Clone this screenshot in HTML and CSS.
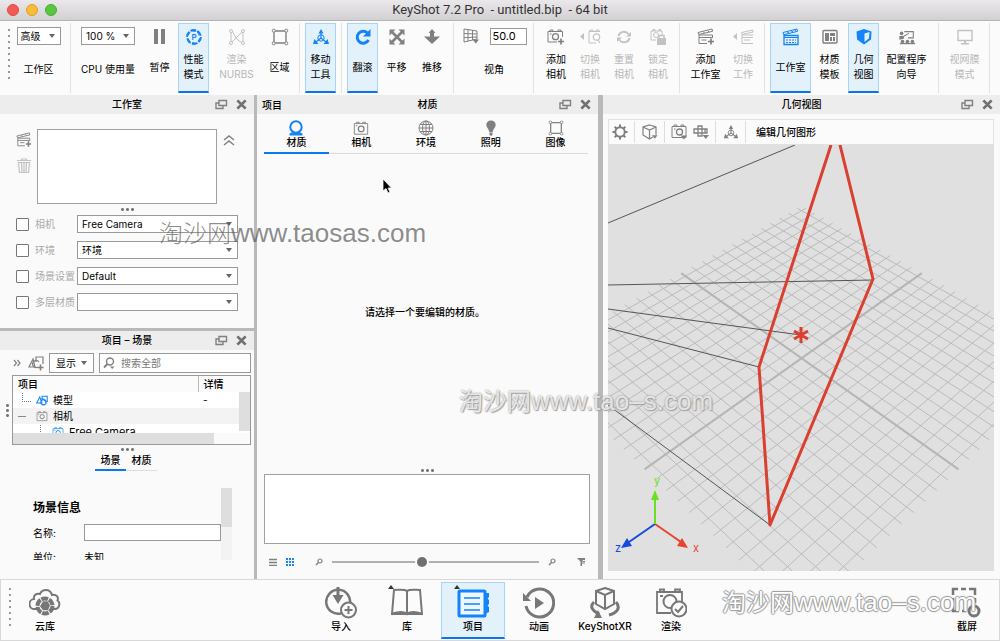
FILE: index.html
```html
<!DOCTYPE html>
<html lang="zh-CN">
<head>
<meta charset="utf-8">
<meta name="viewport" content="width=device-width, initial-scale=1">
<title>KeyShot 7.2 Pro - untitled.bip - 64 bit</title>
<link rel="stylesheet" href="styles.css">
<script src="grid.js" defer></script>
</head>
<body>
<svg class="sprite" aria-hidden="true">
  <symbol id="i-pause" viewBox="0 0 18 18"><path d="M3 1h4v15H3zM10 1h4v15h-4z" fill="currentColor"/></symbol>
  <symbol id="i-perf" viewBox="0 0 18 18"><circle cx="9" cy="9" r="7" fill="none" stroke="currentColor" stroke-width="1.800" stroke-dasharray="5.800 1.500"/><path d="M5.500 2.500l5 1M12 3l2.500 4.500M15.500 9.500l-2.500 4M12 15.500l-5-.8M5.500 15L3 10.500M2.500 8l2.500-4" fill="none" stroke="currentColor" stroke-width="1.200"/><text x="9.200" y="12" font-size="8" font-weight="600" text-anchor="middle" fill="currentColor">P</text></symbol>
  <symbol id="i-nurbs" viewBox="0 0 18 18"><path d="M3 3v12L15 3v12M3 3c4 1 3 9 12 12" fill="none" stroke="currentColor"/><g fill="#fff" stroke="currentColor"><circle cx="3" cy="3" r="1.500"/><circle cx="15" cy="3" r="1.500"/><circle cx="3" cy="15" r="1.500"/><circle cx="15" cy="15" r="1.500"/></g></symbol>
  <symbol id="i-region" viewBox="0 0 18 18"><path d="M3 3h12v12H3z" fill="none" stroke="currentColor" stroke-width="1.400"/><g fill="#fff" stroke="currentColor"><circle cx="2.700" cy="2.700" r="1.500"/><circle cx="15.300" cy="2.700" r="1.500"/><circle cx="2.700" cy="15.300" r="1.500"/><circle cx="15.300" cy="15.300" r="1.500"/></g></symbol>
  <symbol id="i-move" viewBox="0 0 18 18"><path d="M9 4v6M9 10l-5 4M9 10l5 4" fill="none" stroke="currentColor" stroke-width="1.200"/><circle cx="9" cy="10" r="3.200" fill="none" stroke="currentColor"/><path d="M9 1l2.500 4.500h-5zM1 16l1.500-5 4 5zM17 16l-1.500-5-4 5z" fill="currentColor"/></symbol>
  <symbol id="i-tumble" viewBox="0 0 18 18"><path d="M13.500 5A6 6 0 1 0 14.500 12" fill="none" stroke="currentColor" stroke-width="3"/><path d="M16.500 1v7.500H9z" fill="currentColor"/></symbol>
  <symbol id="i-pan" viewBox="0 0 18 18"><path d="M4 4l10 10M14 4L4 14" stroke="currentColor" stroke-width="2.500"/><path d="M1.500 1.500h6l-6 6zM16.500 1.500v6l-6-6zM1.500 16.500v-6l6 6zM16.500 16.500h-6l6-6z" fill="currentColor"/></symbol>
  <symbol id="i-dolly" viewBox="0 0 18 18"><path d="M9 1l3.500 4h-1.500V8.500h6L9 16 1 8.500h6V5H5.500z" fill="currentColor"/></symbol>
  <symbol id="i-fov" viewBox="0 0 18 18"><path d="M2 2l13 2v8L2 15zM2 6.500l13 .500M2 10.700l13-.700M6 2.600v11.500M10.500 3.300v9.700" fill="none" stroke="currentColor"/><path d="M10.500 12.500h6.500l-3.200 4z" fill="currentColor"/></symbol>
  <symbol id="i-camera" viewBox="0 0 18 18"><path d="M1.500 4h15v12h-15zM4 4V2.500h3V4M11 4V2.500h3V4" fill="none" stroke="currentColor"/><circle cx="9.200" cy="10" r="3.200" fill="none" stroke="currentColor" stroke-width="1.400"/><path d="M3 6.500h2" stroke="currentColor"/></symbol>
  <symbol id="i-camera-add" viewBox="0 0 18 18"><path d="M15.500 9V3.500H1V14h9M3 3.500V2h3v1.500M11 3.500V2h3v1.500M3 6h1.500" fill="none" stroke="currentColor"/><circle cx="8.500" cy="8.700" r="3" fill="none" stroke="currentColor" stroke-width="1.300"/><path d="M14 10.500v6M11 13.500h6" stroke="currentColor" stroke-width="1.700"/></symbol>
  <symbol id="i-camera-next" viewBox="0 0 24 18"><path d="M6 5v7L2 8.500z" fill="currentColor"/><path d="M22 3.500H11V15h7M12 3.500V2h3v1.500M18 3.500V2h3v1.500" fill="none" stroke="currentColor"/><circle cx="18.500" cy="9" r="3.200" fill="none" stroke="currentColor" stroke-width="1.200"/><path d="M20 12l2 3" stroke="currentColor" stroke-width="1.200"/></symbol>
  <symbol id="i-reset" viewBox="0 0 18 18"><path d="M3.500 8a5.500 5 0 0 1 10-2M14.500 10a5.500 5 0 0 1-10 2" fill="none" stroke="currentColor" stroke-width="1.900"/><path d="M16 4v4.500h-5zM2 14V9.500h5z" fill="currentColor"/></symbol>
  <symbol id="i-lock" viewBox="0 0 18 18"><path d="M13 7V3H2v9h5M4 3V1.500h2V3M10 3V1.500h2V3" fill="none" stroke="currentColor"/><circle cx="7" cy="7" r="2.500" fill="none" stroke="currentColor"/><path d="M8 10h9v7H8z" fill="currentColor"/><path d="M10 10V7.500h5V10" fill="none" stroke="currentColor" stroke-width="1.500"/></symbol>
  <symbol id="i-studio" viewBox="0 0 18 18"><path d="M2 7.500h14v9H2z" fill="none" stroke="currentColor" stroke-width="1.300"/><path d="M1 4.500L15 1l.6 2.300L1.700 6.700z" fill="none" stroke="currentColor"/><path d="M5 3.800l2 1.200M9 2.800l2 1.200M12.500 2l1.500 1" stroke="currentColor"/><path d="M2 9.500h14" stroke="currentColor"/><path d="M4 14.500h10M4 12h10" stroke="currentColor" stroke-dasharray="2 1"/></symbol>
  <symbol id="i-studio-add" viewBox="0 0 18 18"><path d="M15.500 10V7H2v8.500h8M2 9.500h13.500M4.500 12h5" fill="none" stroke="currentColor"/><path d="M1 4.500L15 1l.6 2.300L1.700 6.500zM6 3.500l1.500 1.500M10.500 2.500L12 4" fill="none" stroke="currentColor"/><path d="M14 10.500v6M11 13.500h6" stroke="currentColor" stroke-width="1.700"/></symbol>
  <symbol id="i-studio-next" viewBox="0 0 24 18"><path d="M6 5v7L2 8.500z" fill="currentColor"/><path d="M22 7H11v8.500h11M11 9.500h11M13 12h6" fill="none" stroke="currentColor"/><path d="M10.500 4.500L22 2v2L11 6.500z" fill="none" stroke="currentColor"/></symbol>
  <symbol id="i-template" viewBox="0 0 18 18"><rect x="2" y="2.500" width="14" height="12.500" rx="1" fill="none" stroke="currentColor" stroke-width="1.400"/><path d="M4 5h4v8H4zM9 5h5v3H9zM9 9h2v4H9zM12 9h2v4h-2z" fill="currentColor"/></symbol>
  <symbol id="i-geo" viewBox="0 0 18 18"><path d="M9 1l7.500 2.500-.5 8L9 16.500 2 11.500l-.5-8z" fill="currentColor"/><path d="M9.500 5.500l5-1.500-.5 6.300-4.500 3.700z" fill="#e3f1fa"/></symbol>
  <symbol id="i-wizard" viewBox="0 0 20 18"><path d="M7 3h10v7h-6M5 9l7-4" fill="none" stroke="currentColor" stroke-width="1.200"/><circle cx="4" cy="5" r="2" fill="currentColor"/><path d="M1.500 12V8h5v3z" fill="currentColor"/><g fill="currentColor"><circle cx="5" cy="14" r="2"/><circle cx="10.500" cy="14" r="2"/><circle cx="16" cy="14" r="2"/><path d="M2 17h17v-1.500H2z"/></g></symbol>
  <symbol id="i-monitor" viewBox="0 0 18 18"><path d="M2 2.500h14v10H2z" fill="none" stroke="currentColor" stroke-width="1.400"/><path d="M8 13h2v2h3v1.500H5V15h3z" fill="currentColor"/></symbol>
  <symbol id="i-float" viewBox="0 0 14 12"><path d="M5 1.500h7.500v5H5zM5 4H2v5.500h7V7" fill="none" stroke="currentColor" stroke-width="1.400"/></symbol>
  <symbol id="i-close" viewBox="0 0 12 12"><path d="M1.500 1.500l9 9M10.500 1.500l-9 9" stroke="currentColor" stroke-width="3"/></symbol>
  <symbol id="i-trash" viewBox="0 0 16 16"><path d="M1 2.500h14M5.500 2.500V1h5v1.500M2.500 4.500l1 10h9l1-10zM5.500 5l.5 9M8 5v9M10.500 5l-.5 9" fill="none" stroke="currentColor" stroke-width="1.200"/></symbol>
  <symbol id="i-up" viewBox="0 0 12 12"><path d="M1 6l5-4 5 4M1 11l5-4 5 4" fill="none" stroke="currentColor" stroke-width="1.500"/></symbol>
  <symbol id="i-more" viewBox="0 0 8 8"><path d="M1 1l2.500 3L1 7M4.500 1L7 4 4.500 7" fill="none" stroke="currentColor" stroke-width="1.200"/></symbol>
  <symbol id="i-shapes" viewBox="0 0 16 16"><path d="M5 4L1 12h7zM8 8V3h7v7l-3 1M8 5l5 5" fill="none" stroke="currentColor" stroke-width="1.400"/><circle cx="10" cy="11" r="3.500" fill="none" stroke="currentColor" stroke-width="1.400"/></symbol>
  <symbol id="i-shapes-add" viewBox="0 0 16 16"><path d="M5 4L1 12h6zM8 7V2h7v7" fill="none" stroke="currentColor" stroke-width="1.200"/><path d="M11 7a3.500 3.500 0 1 0-1 5" fill="none" stroke="currentColor" stroke-width="1.200"/><path d="M12.500 9.500v6M9.500 12.500h6" stroke="currentColor" stroke-width="1.600"/></symbol>
  <symbol id="i-search" viewBox="0 0 12 12"><circle cx="7" cy="4.500" r="3.500" fill="none" stroke="currentColor" stroke-width="1.400"/><path d="M4.500 7L1 10.500" stroke="currentColor" stroke-width="1.800"/><path d="M7 9.500h4.500L9.200 12z" fill="currentColor"/></symbol>
  <symbol id="i-loupe" viewBox="0 0 8 8"><circle cx="5" cy="3" r="2" fill="none" stroke="currentColor" stroke-width="1.200"/><path d="M3.500 4.500L1 7" stroke="currentColor" stroke-width="1.500"/></symbol>
  <symbol id="i-material" viewBox="0 0 16 16"><circle cx="8" cy="7" r="5.700" fill="none" stroke="currentColor" stroke-width="2"/><path d="M1.500 15.500v-2l3-1.500h7l3 1.500v2z" fill="currentColor"/></symbol>
  <symbol id="i-globe" viewBox="0 0 16 16"><g fill="none" stroke="currentColor"><circle cx="8" cy="8" r="7"/><ellipse cx="8" cy="8" rx="3.500" ry="7"/><path d="M8 1v14M1 8h14M2 4.500h12M2 11.500h12"/></g></symbol>
  <symbol id="i-bulb" viewBox="0 0 16 16"><path d="M8 .5c3 0 4.700 2 4.700 4.500S10 9 9.700 12H6.300C6 9 3.300 7.500 3.300 5S5 .5 8 .5zM6.500 12.500h3V15l-1.500 1-1.500-1z" fill="currentColor"/></symbol>
  <symbol id="i-list" viewBox="0 0 8 8"><path d="M0 1.500h8M0 4.500h8M0 7.500h8" stroke="currentColor" stroke-width="1.500"/></symbol>
  <symbol id="i-tiles" viewBox="0 0 8 8"><path d="M0 0h2v2H0zM3 0h2v2H3zM6 0h2v2H6zM0 3h2v2H0zM3 3h2v2H3zM6 3h2v2H6zM0 6h2v2H0zM3 6h2v2H3zM6 6h2v2H6z" fill="currentColor"/></symbol>
  <symbol id="i-filter" viewBox="0 0 8 8"><path d="M0 0h8v2H6L5 3.500V8H3.500V3.500z" fill="currentColor"/><path d="M5 5h3M5.500 3.500H8" stroke="currentColor"/></symbol>
  <symbol id="i-gear" viewBox="0 0 16 16"><circle cx="8" cy="8" r="4.700" fill="none" stroke="currentColor" stroke-width="1.900"/><path d="M8 .5V3M8 13v2.500M.5 8H3M13 8h2.500M2.700 2.700l1.800 1.800M11.500 11.500l1.800 1.800M13.300 2.700l-1.800 1.800M4.500 11.500l-1.800 1.800" stroke="currentColor" stroke-width="2"/></symbol>
  <symbol id="i-cube" viewBox="0 0 16 16"><path d="M7.500 1L14 3v8l-6.500 4L1 11V3zM1 3l6.500 3L14 3M7.500 6v9" fill="none" stroke="currentColor" stroke-width="1.200"/><path d="M9.500 11H16l-3.200 4z" fill="currentColor" stroke="#fbfbfb" stroke-width=".5"/></symbol>
  <symbol id="i-camera-menu" viewBox="0 0 16 16"><path d="M1 2.500h14v11H1zM3 2.500V1h3v1.500M10 2.500V1h3v1.500M3 5h1.500" fill="none" stroke="currentColor"/><circle cx="8.500" cy="8" r="3" fill="none" stroke="currentColor" stroke-width="1.300"/><path d="M9.500 11.500H16l-3.200 4z" fill="currentColor"/></symbol>
  <symbol id="i-views" viewBox="0 0 16 16"><path d="M5 2h4v10H5zM1 5h13v4H1zM9 2v10M12 5v4" fill="none" stroke="currentColor" stroke-width="1.300"/><path d="M9.500 11H16l-3.200 4z" fill="currentColor"/></symbol>
  <symbol id="i-cloud" viewBox="0 0 32 32"><path d="M8 22H6a5 5 0 0 1-1-10C4 8 8 6 11 7c2-5 10-6 12 1 4-1 7 2 5.500 5.500C32 16 30 22 26 22h-2" fill="none" stroke="currentColor" stroke-width="2"/><circle cx="16" cy="19" r="7.500" fill="none" stroke="currentColor" stroke-width="4" stroke-dasharray="6.800 1.050"/><path d="M14 14.200h4.500l2.500 4-2 5h-5l-3-4z" fill="currentColor"/></symbol>
  <symbol id="i-import" viewBox="0 0 32 32"><path d="M16 26.500A12 12 0 1 1 25 17" fill="none" stroke="currentColor" stroke-width="2.500"/><path d="M11.500 0h3v8h4L13 17 7.500 8h4z" fill="currentColor"/><circle cx="23.500" cy="23" r="7.500" fill="#fbfbfb" stroke="currentColor" stroke-width="2"/><path d="M23.500 19v8M19.500 23h8" stroke="currentColor" stroke-width="2"/></symbol>
  <symbol id="i-book" viewBox="0 0 32 32"><path d="M3 3c5 0 10-1 13 1 3-2 8-1 13-1l2 24H1zM16 4v23" fill="none" stroke="currentColor" stroke-width="2"/><path d="M1 27c6-2 12-2 15 0 3-2 9-2 15 0" fill="none" stroke="currentColor" stroke-width="2.500"/></symbol>
  <symbol id="i-project" viewBox="0 0 32 32"><rect x="2" y="4" width="26" height="25" rx="1" fill="#edf7fd" stroke="currentColor" stroke-width="3"/><path d="M7 11h16M7 17h16M7 23h16" stroke="currentColor" stroke-width="1.500"/><path d="M28 6h4v4l-1.500 1.500L32 13v4l-1.500 1.500L32 20v5l-4 2z" fill="currentColor"/></symbol>
  <symbol id="i-anim" viewBox="0 0 32 32"><path d="M4 10A14 14 0 1 1 3 19" fill="none" stroke="currentColor" stroke-width="3"/><path d="M0 6v8h8zM12 10l9 6-9 6z" fill="currentColor"/></symbol>
  <symbol id="i-xr" viewBox="0 0 32 32"><path d="M16 1l9 3v13l-9 5-9-5V4zM7 4l9 4 9-4M16 8v14" fill="none" stroke="currentColor" stroke-width="2"/><path d="M5 15c-4 4-3 8 5 12M27 15c5 6 1 11-7 13" fill="none" stroke="currentColor" stroke-width="3"/><path d="M9 23l4 8H5z" fill="currentColor"/></symbol>
  <symbol id="i-render" viewBox="0 0 32 32"><path d="M16 26H2V5h25v12M5 5V2.500h4V5M20 5V2.500h5V5M5 9h3" fill="none" stroke="currentColor" stroke-width="1.800"/><circle cx="15" cy="14.500" r="6.500" fill="none" stroke="currentColor" stroke-width="2"/><circle cx="24" cy="22" r="7.500" fill="#fbfbfb" stroke="currentColor" stroke-width="2"/><path d="M20 22l3 3 5-6" fill="none" stroke="currentColor" stroke-width="2"/></symbol>
  <symbol id="i-shot" viewBox="0 0 32 32"><path d="M2 8V2h5M10 2h5M18 2h6v6M24 11v5M2 11v5M2 19v5h6M11 24h4" fill="none" stroke="currentColor" stroke-width="2.500"/><circle cx="23" cy="24" r="5" fill="none" stroke="currentColor" stroke-width="3"/></symbol>
</svg>

<div class="app">
  <header class="titlebar">
    <div class="lights"><i class="light light-red"></i><i class="light light-amber"></i><i class="light light-green"></i></div>
    <h1 class="titlebar-text">KeyShot 7.2 Pro &nbsp;- untitled.bip &nbsp;- 64 bit</h1>
  </header>

  <nav class="toolbar" aria-label="工具栏">
    <i class="grip"></i>
    <div class="group group-field">
      <span class="combo combo-mode"><select id="mode"><option>高级</option></select></span>
      <label class="field-label" for="mode">工作区</label>
    </div>
    <div class="group group-cpu">
      <div class="field">
        <span class="combo combo-cpu"><select id="cpu"><option>100 %</option></select></span>
        <label class="field-label" for="cpu">CPU 使用量</label>
      </div>
      <button class="tool w-m"><svg class="icon"><use href="#i-pause"/></svg><span class="tool-label">暂停</span></button>
      <button class="tool w-s active"><svg class="icon"><use href="#i-perf"/></svg><span class="tool-label">性能<br>模式</span></button>
      <button class="tool w-xl" disabled><svg class="icon"><use href="#i-nurbs"/></svg><span class="tool-label">渲染<br>NURBS</span></button>
      <button class="tool w-s"><svg class="icon"><use href="#i-region"/></svg><span class="tool-label">区域</span></button>
    </div>
    <div class="group group-move">
      <button class="tool w-s active"><svg class="icon"><use href="#i-move"/></svg><span class="tool-label">移动<br>工具</span></button>
    </div>
    <div class="group">
      <button class="tool w-s active"><svg class="icon"><use href="#i-tumble"/></svg><span class="tool-label">翻滚</span></button>
      <button class="tool w-m"><svg class="icon"><use href="#i-pan"/></svg><span class="tool-label">平移</span></button>
      <button class="tool w-n"><svg class="icon"><use href="#i-dolly"/></svg><span class="tool-label">推移</span></button>
    </div>
    <div class="group group-fov">
      <div class="fov-row"><svg class="icon"><use href="#i-fov"/></svg><input class="fov-input" id="fov" value="50.0"></div>
      <label class="field-label" for="fov">视角</label>
    </div>
    <div class="group">
      <button class="tool w-n"><svg class="icon"><use href="#i-camera-add"/></svg><span class="tool-label">添加<br>相机</span></button>
      <button class="tool w-n" disabled><svg class="icon icon-wide"><use href="#i-camera-next"/></svg><span class="tool-label">切换<br>相机</span></button>
      <button class="tool w-n" disabled><svg class="icon"><use href="#i-reset"/></svg><span class="tool-label">重置<br>相机</span></button>
      <button class="tool w-n" disabled><svg class="icon"><use href="#i-lock"/></svg><span class="tool-label">锁定<br>相机</span></button>
    </div>
    <div class="group">
      <button class="tool w-l"><svg class="icon"><use href="#i-studio-add"/></svg><span class="tool-label">添加<br>工作室</span></button>
      <button class="tool w-n" disabled><svg class="icon icon-wide"><use href="#i-studio-next"/></svg><span class="tool-label">切换<br>工作</span></button>
    </div>
    <div class="group">
      <button class="tool w-l active"><svg class="icon"><use href="#i-studio"/></svg><span class="tool-label">工作室</span></button>
      <button class="tool w-m"><svg class="icon"><use href="#i-template"/></svg><span class="tool-label">材质<br>模板</span></button>
      <button class="tool w-s active"><svg class="icon"><use href="#i-geo"/></svg><span class="tool-label">几何<br>视图</span></button>
      <button class="tool w-xl"><svg class="icon"><use href="#i-wizard"/></svg><span class="tool-label">配置程序<br>向导</span></button>
    </div>
    <div class="group">
      <button class="tool w-l" disabled><svg class="icon"><use href="#i-monitor"/></svg><span class="tool-label">视网膜<br>模式</span></button>
    </div>
  </nav>

  <main class="workspace">
    <div class="column">
      <section class="panel studio">
        <header class="panel-head">
          <h2 class="panel-title">工作室</h2>
          <button class="head-btn" aria-label="浮动"><svg class="float-icon"><use href="#i-float"/></svg></button>
          <button class="head-btn" aria-label="关闭"><svg class="close-icon"><use href="#i-close"/></svg></button>
        </header>
        <div class="studio-top">
          <div class="side-tools">
            <button class="bare" aria-label="添加工作室"><svg class="icon-16"><use href="#i-studio-add"/></svg></button>
            <button class="bare" aria-label="删除" disabled><svg class="icon-16"><use href="#i-trash"/></svg></button>
          </div>
          <div class="listbox"></div>
          <button class="bare" aria-label="收起"><svg class="icon-12"><use href="#i-up"/></svg></button>
        </div>
        <i class="dots"></i>
        <div class="settings">
          <div class="setting"><input type="checkbox" id="c1" class="check"><label for="c1">相机</label><span class="combo"><select aria-label="相机"><option>Free Camera</option></select></span></div>
          <div class="setting"><input type="checkbox" id="c2" class="check"><label for="c2">环境</label><span class="combo"><select aria-label="环境"><option>环境</option></select></span></div>
          <div class="setting"><input type="checkbox" id="c3" class="check"><label for="c3">场景设置</label><span class="combo"><select aria-label="场景设置"><option>Default</option></select></span></div>
          <div class="setting"><input type="checkbox" id="c4" class="check"><label for="c4">多层材质</label><span class="combo"><select aria-label="多层材质"><option></option></select></span></div>
        </div>
      </section>

      <section class="panel scene-panel">
        <header class="panel-head">
          <h2 class="panel-title">项目 – 场景</h2>
          <button class="head-btn" aria-label="浮动"><svg class="float-icon"><use href="#i-float"/></svg></button>
          <button class="head-btn" aria-label="关闭"><svg class="close-icon"><use href="#i-close"/></svg></button>
        </header>
        <div class="filter-row">
          <svg class="icon-8"><use href="#i-more"/></svg>
          <svg class="icon-16"><use href="#i-shapes-add"/></svg>
          <button class="show-btn">显示<i class="caret"></i></button>
          <label class="search"><svg class="icon-12"><use href="#i-search"/></svg><input type="text" class="search-input" placeholder="搜索全部" aria-label="搜索全部"></label>
        </div>
        <div class="tree-row">
          <i class="dots dots-v"></i>
          <div class="tree">
            <div class="tree-view">
              <table class="tree-table">
                <thead><tr><th>项目</th><th class="detail">详情</th></tr></thead>
                <tbody>
                  <tr><td><span class="node"><i class="branch"></i><svg class="icon-12 blue"><use href="#i-shapes"/></svg>模型</span></td><td>-</td></tr>
                  <tr class="alt"><td><span class="node"><i class="minus"></i><svg class="icon-12"><use href="#i-camera"/></svg>相机</span></td><td></td></tr>
                  <tr><td><span class="node node-2"><i class="branch"></i><svg class="icon-12 blue"><use href="#i-camera"/></svg>Free Camera</span></td><td></td></tr>
                </tbody>
              </table>
              <i class="vthumb"></i>
            </div>
            <div class="htrack"><i class="hthumb"></i></div>
          </div>
        </div>
        <i class="dots"></i>
        <div class="mini-tabs"><button class="mini-tab on">场景</button><button class="mini-tab">材质</button></div>
        <div class="info">
          <div class="info-body">
            <h3 class="info-title">场景信息</h3>
            <div class="info-row"><label for="nm">名称:</label><input id="nm" class="info-input"></div>
            <div class="info-row"><span>单位:</span><span>未知</span></div>
          </div>
          <div class="info-track"><i class="info-thumb"></i></div>
        </div>
      </section>
    </div>

    <section class="panel material">
      <header class="panel-head">
        <span class="panel-side">项目</span>
        <h2 class="panel-title">材质</h2>
        <button class="head-btn" aria-label="浮动"><svg class="float-icon"><use href="#i-float"/></svg></button>
        <button class="head-btn" aria-label="关闭"><svg class="close-icon"><use href="#i-close"/></svg></button>
      </header>
      <div class="tabs">
        <button class="tab on"><svg class="icon-16"><use href="#i-material"/></svg>材质</button>
        <button class="tab"><svg class="icon-16"><use href="#i-camera"/></svg>相机</button>
        <button class="tab"><svg class="icon-16"><use href="#i-globe"/></svg>环境</button>
        <button class="tab"><svg class="icon-16"><use href="#i-bulb"/></svg>照明</button>
        <button class="tab"><svg class="icon-16"><use href="#i-region"/></svg>图像</button>
      </div>
      <p class="empty">请选择一个要编辑的材质。</p>
      <i class="dots"></i>
      <div class="material-list"></div>
      <div class="zoom-row">
        <svg class="icon-8"><use href="#i-list"/></svg>
        <svg class="icon-8 blue"><use href="#i-tiles"/></svg>
        <svg class="icon-8 zoom-out"><use href="#i-loupe"/></svg>
        <input type="range" class="slider" min="0" max="100" value="43" aria-label="缩放">
        <svg class="icon-8"><use href="#i-loupe"/></svg>
        <svg class="icon-8 zoom-filter"><use href="#i-filter"/></svg>
      </div>
    </section>

    <section class="panel geometry">
      <header class="panel-head">
        <h2 class="panel-title">几何视图</h2>
        <button class="head-btn" aria-label="浮动"><svg class="float-icon"><use href="#i-float"/></svg></button>
        <button class="head-btn" aria-label="关闭"><svg class="close-icon"><use href="#i-close"/></svg></button>
      </header>
      <div class="view">
        <div class="view-bar">
          <button class="view-group" aria-label="设置"><svg class="icon-16"><use href="#i-gear"/></svg></button>
          <button class="view-group" aria-label="显示方式"><svg class="icon-16"><use href="#i-cube"/></svg></button>
          <div class="view-group view-pair">
            <button aria-label="相机"><svg class="icon-16"><use href="#i-camera-menu"/></svg></button>
            <button aria-label="视图"><svg class="icon-16"><use href="#i-views"/></svg></button>
          </div>
          <button class="view-group" aria-label="移动"><svg class="icon-16"><use href="#i-move"/></svg></button>
          <button class="view-edit">编辑几何图形</button>
        </div>
        <svg class="scene" viewBox="0 0 386 426" preserveAspectRatio="xMidYMid slice" role="img" aria-label="几何视图">
          <g id="grid"></g>
          <g class="wire"><path d="M0 78L187 0M0 140l265-5M0 164l193 26M0 183l151 39M0 260l162 120"/></g>
          <path class="frame" d="M223 0L151 222l11 158L265 134 232 0"/>
          <path class="star" d="M193 182v16M186 186l14 8M200 186l-14 8"/>
          <g stroke-width="2" font-size="11" text-anchor="middle">
            <g stroke="#e8432e" fill="#e8432e"><path d="M47 379l26 18"/><path d="M80 403l-11-2 5-8z" stroke="none"/><text x="88" y="407" stroke="none">x</text></g>
            <g stroke="#1748e0" fill="#1748e0"><path d="M47 379l-26 18"/><path d="M13 403l6-10 5 8z" stroke="none"/><text x="10" y="407" stroke="none">z</text></g>
            <g stroke="#6be01e" fill="#6be01e"><path d="M47 379v-26"/><path d="M47 345l4 10h-8z" stroke="none"/><text x="49" y="340" stroke="none">y</text></g>
          </g>
        </svg>
      </div>
    </section>
  </main>

  <footer class="dock">
    <i class="grip grip-dock"></i>
    <div class="dock-left"><button class="dock-item"><svg class="icon-32"><use href="#i-cloud"/></svg>云库</button></div>
    <div class="dock-center">
      <button class="dock-item"><svg class="icon-32"><use href="#i-import"/></svg>导入</button>
      <button class="dock-item marked"><svg class="icon-32"><use href="#i-book"/></svg>库</button>
      <button class="dock-item marked active"><svg class="icon-32"><use href="#i-project"/></svg>项目</button>
      <button class="dock-item"><svg class="icon-32"><use href="#i-anim"/></svg>动画</button>
      <button class="dock-item"><svg class="icon-32"><use href="#i-xr"/></svg>KeyShotXR</button>
      <button class="dock-item"><svg class="icon-32"><use href="#i-render"/></svg>渲染</button>
    </div>
    <div class="dock-right"><button class="dock-item"><svg class="icon-32"><use href="#i-shot"/></svg>截屏</button></div>
  </footer>

  <span class="mark mark-a">淘沙网<span class="mark-url">www.taosas.com</span></span>
  <span class="mark mark-b">淘沙网<span class="mark-url">www.tao–s.com</span></span>
  <span class="mark mark-c">淘沙网<span class="mark-url">www.tao–s.com</span></span>
  <svg class="pointer" viewBox="0 0 10 16" aria-hidden="true"><path d="M1 1v12l3-2.500L6 15l2-1-2-4h3.500z" fill="#000" stroke="#fff" stroke-width=".8"/></svg>
</div>
</body>
</html>
```
FILE: styles.css
```css
* { box-sizing: border-box; }

body {
  margin: 0;
  font: 10px/14px Inter, "Noto Sans CJK SC", sans-serif;
  color: #000;
  background: #fafafa;
}

button, input, select { font: inherit; color: inherit; margin: 0; border-radius: 0; }
button { border: 0; padding: 0; background: none; }
button:disabled { color: #b8b8b8; }
h1, h2, h3, p { margin: 0; font-weight: 500; font-size: inherit; }
svg { display: block; flex: none; }
.sprite { display: none; }

.app {
  position: relative;
  display: flex;
  flex-direction: column;
  height: 100vh;
  overflow: hidden;
}

/* Icon sizes */
.icon { width: 18px; height: 18px; color: #808080; }
.icon-wide { width: 24px; }
.icon-32 { width: 32px; height: 32px; color: #777; }
.icon-16 { width: 16px; height: 16px; color: #808080; }
.icon-12 { width: 12px; height: 12px; color: #808080; }
.icon-8 { width: 8px; height: 8px; color: #808080; }
.blue { color: #1a84f5; }
button:disabled svg { color: #c2c2c2; }

/* Title bar */
.titlebar {
  flex: none;
  position: relative;
  display: flex;
  align-items: center;
  justify-content: center;
  height: 21px;
  background: linear-gradient(#eae8ea, #d2d0d2);
  border-bottom: 1px solid #b5b3b5;
}
.titlebar-text { font: 13px/20px Roboto, sans-serif; color: #333; }
.lights { position: absolute; left: 7px; display: flex; gap: 7px; }
.light { width: 12px; height: 12px; border-radius: 50%; border: 1px solid; }
.light-red { background: #f25b55; border-color: #dd4a44; }
.light-amber { background: #f8bc38; border-color: #dfa123; }
.light-green { background: #5ac63f; border-color: #46ad2d; }

/* Main toolbar */
.toolbar {
  flex: none;
  display: flex;
  height: 74px;
  padding: 2px 0;
  background: #fbfbfb;
}
.grip {
  flex: none;
  width: 2px;
  margin: 6px 4px 10px 8px;
  background: repeating-linear-gradient(#999 0 2px, transparent 2px 6px);
}
.group { flex: none; display: flex; padding: 0 4px 0 5px; border-right: 1px solid #e2e2e2; }
.group-field, .group-fov, .field { display: flex; flex-direction: column; align-items: center; padding-top: 4px; }
.group-field { width: 57px; padding-left: 2px; padding-right: 9px; }
.group-cpu { padding-left: 4px; }
.group-move { padding-right: 5px; }
.group-fov { width: 80px; }
.field { width: 66px; }
.field-label { flex: 1; display: flex; align-items: center; white-space: nowrap; }
.fov-row { display: flex; align-items: center; gap: 10px; }
.fov-input { width: 37px; height: 17px; padding: 0 2px; border: 1px solid #999; background: #fff; font-size: 11px; }

.tool {
  display: flex;
  flex-direction: column;
  align-items: center;
  flex: none;
  padding: 4px 0 3px;
  border: 1px solid transparent;
  border-bottom-width: 2px;
}
.tool-label { flex: 1; display: flex; align-items: center; text-align: center; line-height: 15px; white-space: nowrap; }
.w-s { width: 31px; }
.w-n { width: 34px; }
.w-m { width: 37px; }
.w-l { width: 41px; }
.w-xl { width: 55px; }
.active { background: #e3f1fa; border-color: #a6d3f7; border-bottom-color: #0a74f0; }
.active svg { color: #1483f8; }

/* Drop-downs */
.combo { position: relative; display: block; height: 18px; background: #fff; border: 1px solid #999; }
.combo select { appearance: none; display: block; width: 100%; height: 100%; border: 0; padding: 0 12px 0 4px; background: none; outline: 0; line-height: 14px; }
.combo::after, .caret { border: 3px solid transparent; border-top: 4px solid #666; border-bottom: 0; }
.combo::after { content: ""; position: absolute; right: 5px; top: 6px; pointer-events: none; }
.combo-mode { width: 44px; }
.combo-mode select { padding-left: 3px; }
.combo-cpu { width: 54px; }

/* Panels */
.workspace {
  flex: 1;
  min-height: 0;
  display: grid;
  grid-template-columns: 254fr 343fr 397fr;
  grid-template-rows: minmax(0, 1fr);
  column-gap: 3px;
  background: #b9b9b9;
}
.column { display: flex; flex-direction: column; gap: 3px; min-width: 0; }
.panel { display: flex; flex-direction: column; min-width: 0; background: #fafafa; }
.panel-head {
  flex: none;
  position: relative;
  display: flex;
  align-items: center;
  justify-content: flex-end;
  gap: 8px;
  height: 19px;
  padding: 0 7px;
  background: #ededed;
}
.panel-title { position: absolute; inset: 0; line-height: 19px; text-align: center; pointer-events: none; }
.panel-side { margin-right: auto; font-weight: 500; }
.float-icon { width: 14px; height: 12px; color: #808080; }
.close-icon { width: 11px; height: 11px; color: #707070; }

.dots {
  flex: none;
  align-self: center;
  width: 15px;
  height: 3px;
  background: radial-gradient(circle, #777 0 1px, transparent 2px) 0 0 / 5px 3px;
}
.dots-v { width: 3px; height: 15px; background-size: 3px 5px; }

/* Studio panel */
.studio { flex: none; height: 233px; }
.studio-top { display: flex; gap: 6px; padding: 15px 19px 4px 16px; }
.side-tools { display: flex; flex-direction: column; gap: 10px; padding-top: 3px; width: 15px; }
.studio-top > .bare { align-self: flex-start; padding-top: 5px; }
.listbox { flex: 1; height: 75px; background: #fff; border: 1px solid #a0a0a0; }
.settings { display: flex; flex-direction: column; gap: 8px; padding: 4px 16px 0; }
.setting { display: grid; grid-template-columns: 13px 42px 1fr; align-items: center; column-gap: 6px; height: 18px; }
.setting label { color: #aaa; white-space: nowrap; }
.setting .combo { margin-left: -6px; }
.setting .combo select { font-size: 10px; }
.check { appearance: none; width: 13px; height: 13px; border: 1px solid #777; border-radius: 1px; background: #fff; }

/* Scene panel */
.scene-panel { flex: 1; min-height: 0; }
.filter-row { display: flex; align-items: center; gap: 5px; padding: 2px 3px 2px 13px; height: 25px; }
.filter-row .icon-16 { margin-left: 2px; }
.show-btn { display: flex; align-items: center; justify-content: center; gap: 5px; width: 45px; height: 20px; border: 1px solid #999; background: #fff; }
.search { flex: 1; min-width: 0; display: flex; align-items: center; gap: 6px; height: 20px; padding: 0 3px; border: 1px solid #999; background: #fff; }
.search-input { flex: 1; min-width: 0; height: 16px; border: 0; padding: 0; background: none; outline: 0; }
.search-input::placeholder { color: #777; }
.tree-row { display: flex; align-items: center; gap: 3px; padding: 0 3px 0 6px; }
.tree { flex: 1; border: 1px solid #999; background: #fff; }
.tree-view { position: relative; height: 57px; overflow: hidden; }
.tree-table { width: 100%; border-collapse: collapse; table-layout: fixed; }
.tree-table th { height: 16px; padding: 0 5px; text-align: left; font-weight: 500; background: #fbfbfb; line-height: 15px; }
.tree-table th.detail { width: 52px; border-left: 1px solid #bbb; }
.tree-table td { height: 16px; padding: 1px 5px 0; line-height: 14px; vertical-align: top; }
.alt { background: #f3f3f3; }
.node { display: flex; align-items: center; gap: 5px; }
.node-2 { padding-left: 18px; line-height: 11px; font-size: 11px; }
.branch { width: 9px; height: 9px; margin: 0 0 5px 4px; border-left: 1px dotted #777; border-bottom: 1px dotted #777; }
.minus { width: 8px; height: 1px; margin-right: 5px; background: #888; }
.node-2 .branch { width: 7px; }
.vthumb { position: absolute; right: 0; top: 16px; width: 11px; height: 39px; background: #dedede; }
.htrack { height: 11px; background: #fafafa; }
.hthumb { display: block; width: 85%; height: 100%; background: #dedede; }
.tree-row + .dots { margin-top: 3px; }
.mini-tabs { display: flex; justify-content: center; padding-right: 2px; }
.mini-tab { width: 31px; height: 20px; border-bottom: 1px solid #ddd; line-height: 16px; padding-bottom: 1px; font-weight: 500; }
.mini-tab.on { border-bottom: 2px solid #0a78f0; padding-bottom: 0; }
.info { display: flex; height: 72px; margin: 17px 22px 0 33px; overflow: hidden; }
.info-body { flex: 1; }
.info-title { font-size: 12px; font-weight: 700; line-height: 18px; padding: 11px 0 7px; }
.info-row { display: grid; grid-template-columns: 51px 1fr; align-items: center; height: 17px; margin-bottom: 7px; }
.info-input { width: 100%; height: 17px; border: 1px solid #999; background: #fff; }
.info-track { width: 11px; background: #f3f3f3; }
.info-thumb { display: block; height: 39px; background: #dedede; }

/* Material panel */
.material { border-right: 2px solid #b9b9b9; }
.material .panel-head { padding-left: 5px; }
.tabs { display: flex; margin: 6px 10px 0 7px; }
.tab { flex: 1; display: flex; flex-direction: column; align-items: center; height: 34px; border-bottom: 1px solid #ddd; font-weight: 500; line-height: 13px; }
.tab.on { border-bottom: 2px solid #0a78f0; }
.tab.on svg { color: #1483f8; }
.empty { flex: 1; display: flex; align-items: center; justify-content: center; padding-right: 5px; }
.material-list { height: 70px; margin: 2px 8px 0 7px; background: #fff; border: 1px solid #a0a0a0; }
.zoom-row { display: flex; align-items: center; gap: 9px; height: 35px; padding: 0 13px 0 12px; }
.zoom-out { margin-left: 12px; }
.zoom-filter { margin-left: 12px; }
.slider { appearance: none; flex: 1; min-width: 0; height: 10px; background: linear-gradient(#b0b0b0, #b0b0b0) center / 100% 2px no-repeat; }
.slider::-webkit-slider-thumb { appearance: none; width: 10px; height: 10px; border-radius: 50%; background: #707070; box-shadow: 0 0 0 2px #fafafa; }

/* Geometry view */
.view { flex: 1; min-height: 0; display: flex; flex-direction: column; margin: 5px 6px 8px 5px; }
.view-bar { flex: none; display: flex; align-items: center; height: 26px; border: 1px solid #e2e2e2; background: #fbfbfb; }
.view-group { display: flex; justify-content: center; width: 30px; padding: 3px 0; border-right: 1px solid #ddd; }
.view-group:first-child { width: 26px; padding-right: 4px; }
.view-pair { width: 51px; gap: 6px; }
.view-edit { padding: 0 10px; font-weight: 500; }
.scene { flex: 1; min-height: 0; width: 100%; background: #e0e0e0; }
.grid-line { stroke: #bbb; stroke-width: 1; }
.grid-axis { stroke: #b5b5b5; stroke-width: 2; }
.wire { fill: none; stroke: #555; stroke-width: 1; }
.frame { fill: none; stroke: #d9402f; stroke-width: 3; stroke-linejoin: round; }
.star { stroke: #d9402f; stroke-width: 3; }

/* Bottom dock */
.dock { flex: none; position: relative; display: grid; grid-template-columns: 1fr auto 1fr; height: 62px; padding: 2px 0 2px 12px; border: 1px solid #d8d8d8; background: #fbfbfb; }
.grip-dock { position: absolute; left: 0; top: 2px; bottom: 2px; }
.dock-center { display: flex; gap: 2px; }
.dock-right { display: flex; justify-content: flex-end; }
.dock-item { position: relative; display: flex; flex-direction: column; align-items: center; width: 64px; height: 57px; padding-top: 4px; border: 1px solid transparent; border-bottom-width: 2px; font-weight: 500; line-height: 15px; }
.dock-item.active { border-color: #a6d3f7; border-bottom-color: #0a74f0; }
.marked::before { content: ""; position: absolute; left: 12px; top: 2px; border: 3px solid transparent; border-bottom: 4px solid #333; border-top: 0; }

/* Overlaid marks and pointer */
.mark { position: absolute; font: 24px/28px "Liberation Sans", "Noto Sans CJK SC", sans-serif; white-space: nowrap; pointer-events: none; }
.mark-url { font-size: 26px; }
.mark-a { left: 159px; top: 219px; color: rgba(90, 90, 90, .7); font-weight: 300; }
.mark-b { left: 459px; top: 387px; color: rgba(250, 250, 250, .8); text-shadow: 0 0 2px #888, 1px 1px 1px #aaa; }
.mark-c { left: 722px; top: 588px; color: #fff; text-shadow: 1px 0 1px #999, -1px 0 1px #999, 0 1px 1px #999, 0 -1px 1px #999; }
.pointer { position: absolute; left: 382px; top: 178px; width: 10px; height: 16px; }
```
FILE: grid.js
```js
// Ground plane of the viewport: 25 lines each way, drawn in perspective.
const HALF = 12;
const REACH = 12.5;

function project(u, v) {
  const depth = 1 - 0.010586 * (u + v);
  return [193.5 + (10.9 * (u - v)) / depth, (213.3 + 5.455 * (u + v)) / depth];
}

function addLine(group, from, to, isAxis) {
  const line = document.createElementNS("http://www.w3.org/2000/svg", "path");
  line.setAttribute("class", isAxis ? "grid-axis" : "grid-line");
  line.setAttribute("d", "M" + project(...from).join(" ") + "L" + project(...to).join(" "));
  group.appendChild(line);
}

const group = document.getElementById("grid");
for (let i = -HALF; i <= HALF; i++) {
  addLine(group, [i, -REACH], [i, REACH], i === 0);
  addLine(group, [-REACH, i], [REACH, i], i === 0);
}
```
